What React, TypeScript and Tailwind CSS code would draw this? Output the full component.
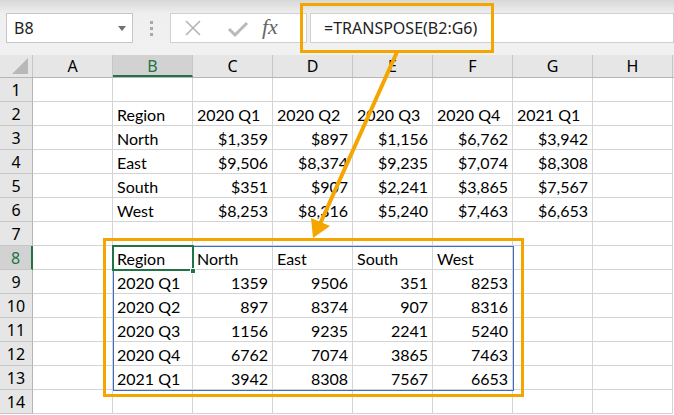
import React from "react";

const COLS = ["A", "B", "C", "D", "E", "F", "G", "H"];

type Cell = { t: string; r?: boolean };

const L = (t: string): Cell => ({ t });
const R = (t: string): Cell => ({ t, r: true });

const data: Record<number, Cell[]> = {
  2: [L(""), L("Region"), L("2020 Q1"), L("2020 Q2"), L("2020 Q3"), L("2020 Q4"), L("2021 Q1"), L("")],
  3: [L(""), L("North"), R("$1,359"), R("$897"), R("$1,156"), R("$6,762"), R("$3,942"), L("")],
  4: [L(""), L("East"), R("$9,506"), R("$8,374"), R("$9,235"), R("$7,074"), R("$8,308"), L("")],
  5: [L(""), L("South"), R("$351"), R("$907"), R("$2,241"), R("$3,865"), R("$7,567"), L("")],
  6: [L(""), L("West"), R("$8,253"), R("$8,316"), R("$5,240"), R("$7,463"), R("$6,653"), L("")],
  8: [L(""), L("Region"), L("North"), L("East"), L("South"), L("West"), L(""), L("")],
  9: [L(""), L("2020 Q1"), R("1359"), R("9506"), R("351"), R("8253"), L(""), L("")],
  10: [L(""), L("2020 Q2"), R("897"), R("8374"), R("907"), R("8316"), L(""), L("")],
  11: [L(""), L("2020 Q3"), R("1156"), R("9235"), R("2241"), R("5240"), L(""), L("")],
  12: [L(""), L("2020 Q4"), R("6762"), R("7074"), R("3865"), R("7463"), L(""), L("")],
  13: [L(""), L("2021 Q1"), R("3942"), R("8308"), R("7567"), R("6653"), L(""), L("")],
};

const ORANGE = "#f5a500";

export default function App() {
  const rows = Array.from({ length: 14 }, (_, i) => i + 1);
  return (
    <div
      className="relative w-[674px] h-[415px] overflow-hidden bg-white text-black"
      style={{ fontFamily: '"Noto Sans", "Open Sans", sans-serif' }}
    >
      {/* Formula toolbar */}
      <div className="h-[55px] bg-gradient-to-b from-[#d8d8d8] via-[#efefef] via-25% to-[#f1f1f1] flex items-start pt-[13px] pl-[6px]">
        <div className="w-[127px] h-[30px] bg-white border border-[#c6c6c6] flex items-center pl-[7px] pr-[6px]">
          <span className="text-[16px] leading-none flex-1 text-[#222]">B8</span>
          <span className="w-0 h-0 border-l-[4px] border-r-[4px] border-t-[5px] border-l-transparent border-r-transparent border-t-[#707070]" />
        </div>
        <div className="w-[37px] h-[30px] flex flex-col items-center justify-center gap-[3px]">
          <span className="w-[3px] h-[3px] bg-[#a8a8a8]" />
          <span className="w-[3px] h-[3px] bg-[#a8a8a8]" />
          <span className="w-[3px] h-[3px] bg-[#a8a8a8]" />
        </div>
        <div className="w-[137px] h-[30px] bg-white border border-[#d0d0d0] flex items-center">
          <svg width="46" height="30" viewBox="0 0 46 30" className="shrink-0">
            <path d="M15 8 L29 22 M29 8 L15 22" stroke="#b4b4b4" strokeWidth="1.6" fill="none" />
          </svg>
          <svg width="44" height="30" viewBox="0 0 44 30" className="shrink-0">
            <path d="M12 16 L18 22 L30 10" stroke="#b9b9b9" strokeWidth="3" fill="none" />
          </svg>
          <span
            className="flex-1 text-left text-[22px] leading-none italic text-[#666] pl-[1px] pb-[2px]"
            style={{ fontFamily: '"Liberation Serif", serif' }}
          >
            fx
          </span>
        </div>
        <div className="w-[3px]" />
        <div className="flex-1 h-[30px] bg-white border border-[#d0d0d0] flex items-center pl-[13px]">
          <span className="text-[16px] leading-none text-[#222]">=TRANSPOSE(B2:G6)</span>
        </div>
      </div>

      {/* Column headers */}
      <div className="flex h-[23px] bg-[#e6e6e6] border-b border-[#b5b5b5]">
        <div className="w-[33px] h-full border-r border-[#c6c6c6] flex items-end justify-end pr-[4px] pb-[3px]">
          <span
            className="w-0 h-0"
            style={{ borderBottom: "16px solid #b8b8b8", borderLeft: "16px solid transparent" }}
          />
        </div>
        {COLS.map((c) => (
          <div
            key={c}
            className={
              c === "B"
                ? "w-[80px] h-full bg-[#d2d2d2] border-r border-[#c6c6c6] border-b-2 border-b-[#217346] text-[#217346] flex items-center justify-center text-[16px] pt-[2px]"
                : "w-[80px] h-full border-r border-[#c6c6c6] flex items-center justify-center text-[16px]"
            }
          >
            {c}
          </div>
        ))}
      </div>

      {/* Rows */}
      {rows.map((r) => (
        <div key={r} className="flex h-[24px]">
          <div
            className={
              r === 8
                ? "w-[33px] h-full bg-[#d2d2d2] border-b border-[#c6c6c6] border-r-2 border-r-[#217346] text-[#217346] flex items-center justify-center text-[16px]"
                : "w-[33px] h-full bg-[#e6e6e6] border-b border-[#c6c6c6] border-r border-r-[#b5b5b5] flex items-center justify-center text-[16px]"
            }
          >
            {r}
          </div>
          {COLS.map((c, ci) => {
            const cell = data[r]?.[ci];
            return (
              <div
                key={c}
                className={
                  cell?.r
                    ? "w-[80px] h-full border-r border-b border-[#d4d4d4] flex items-center justify-end pr-[4px] pt-[2px] text-[16px] whitespace-nowrap"
                    : "w-[80px] h-full border-r border-b border-[#d4d4d4] flex items-center justify-start pl-[4px] pt-[2px] text-[16px] whitespace-nowrap"
                }
                style={{ fontFamily: '"Lato", "Open Sans", sans-serif' }}
              >
                {cell?.t ?? ""}
              </div>
            );
          })}
        </div>
      ))}

      {/* Selection range */}
      <div className="absolute left-[113px] top-[246px] w-[401px] h-[145px] border border-[#3c6dc5] pointer-events-none" />
      {/* Active cell */}
      <div className="absolute left-[112px] top-[245px] w-[82px] h-[26px] border-2 border-[#217346] pointer-events-none" />
      <div className="absolute left-[190px] top-[268px] w-[6px] h-[6px] bg-[#217346] border border-white pointer-events-none" />

      {/* Orange highlight boxes */}
      <div className="absolute left-[300px] top-[3px] w-[194px] h-[50px] border-[3px] border-[#f5a500] pointer-events-none" />
      <div className="absolute left-[103px] top-[238px] w-[421px] h-[159px] border-[3px] border-[#f5a500] pointer-events-none" />

      {/* Arrow */}
      <svg className="absolute left-0 top-0 pointer-events-none" width="674" height="415" viewBox="0 0 674 415">
        <line x1="397" y1="52" x2="320" y2="224" stroke={ORANGE} strokeWidth="4" />
        <polygon points="313,238 311,218 330,226" fill={ORANGE} />
      </svg>
    </div>
  );
}
